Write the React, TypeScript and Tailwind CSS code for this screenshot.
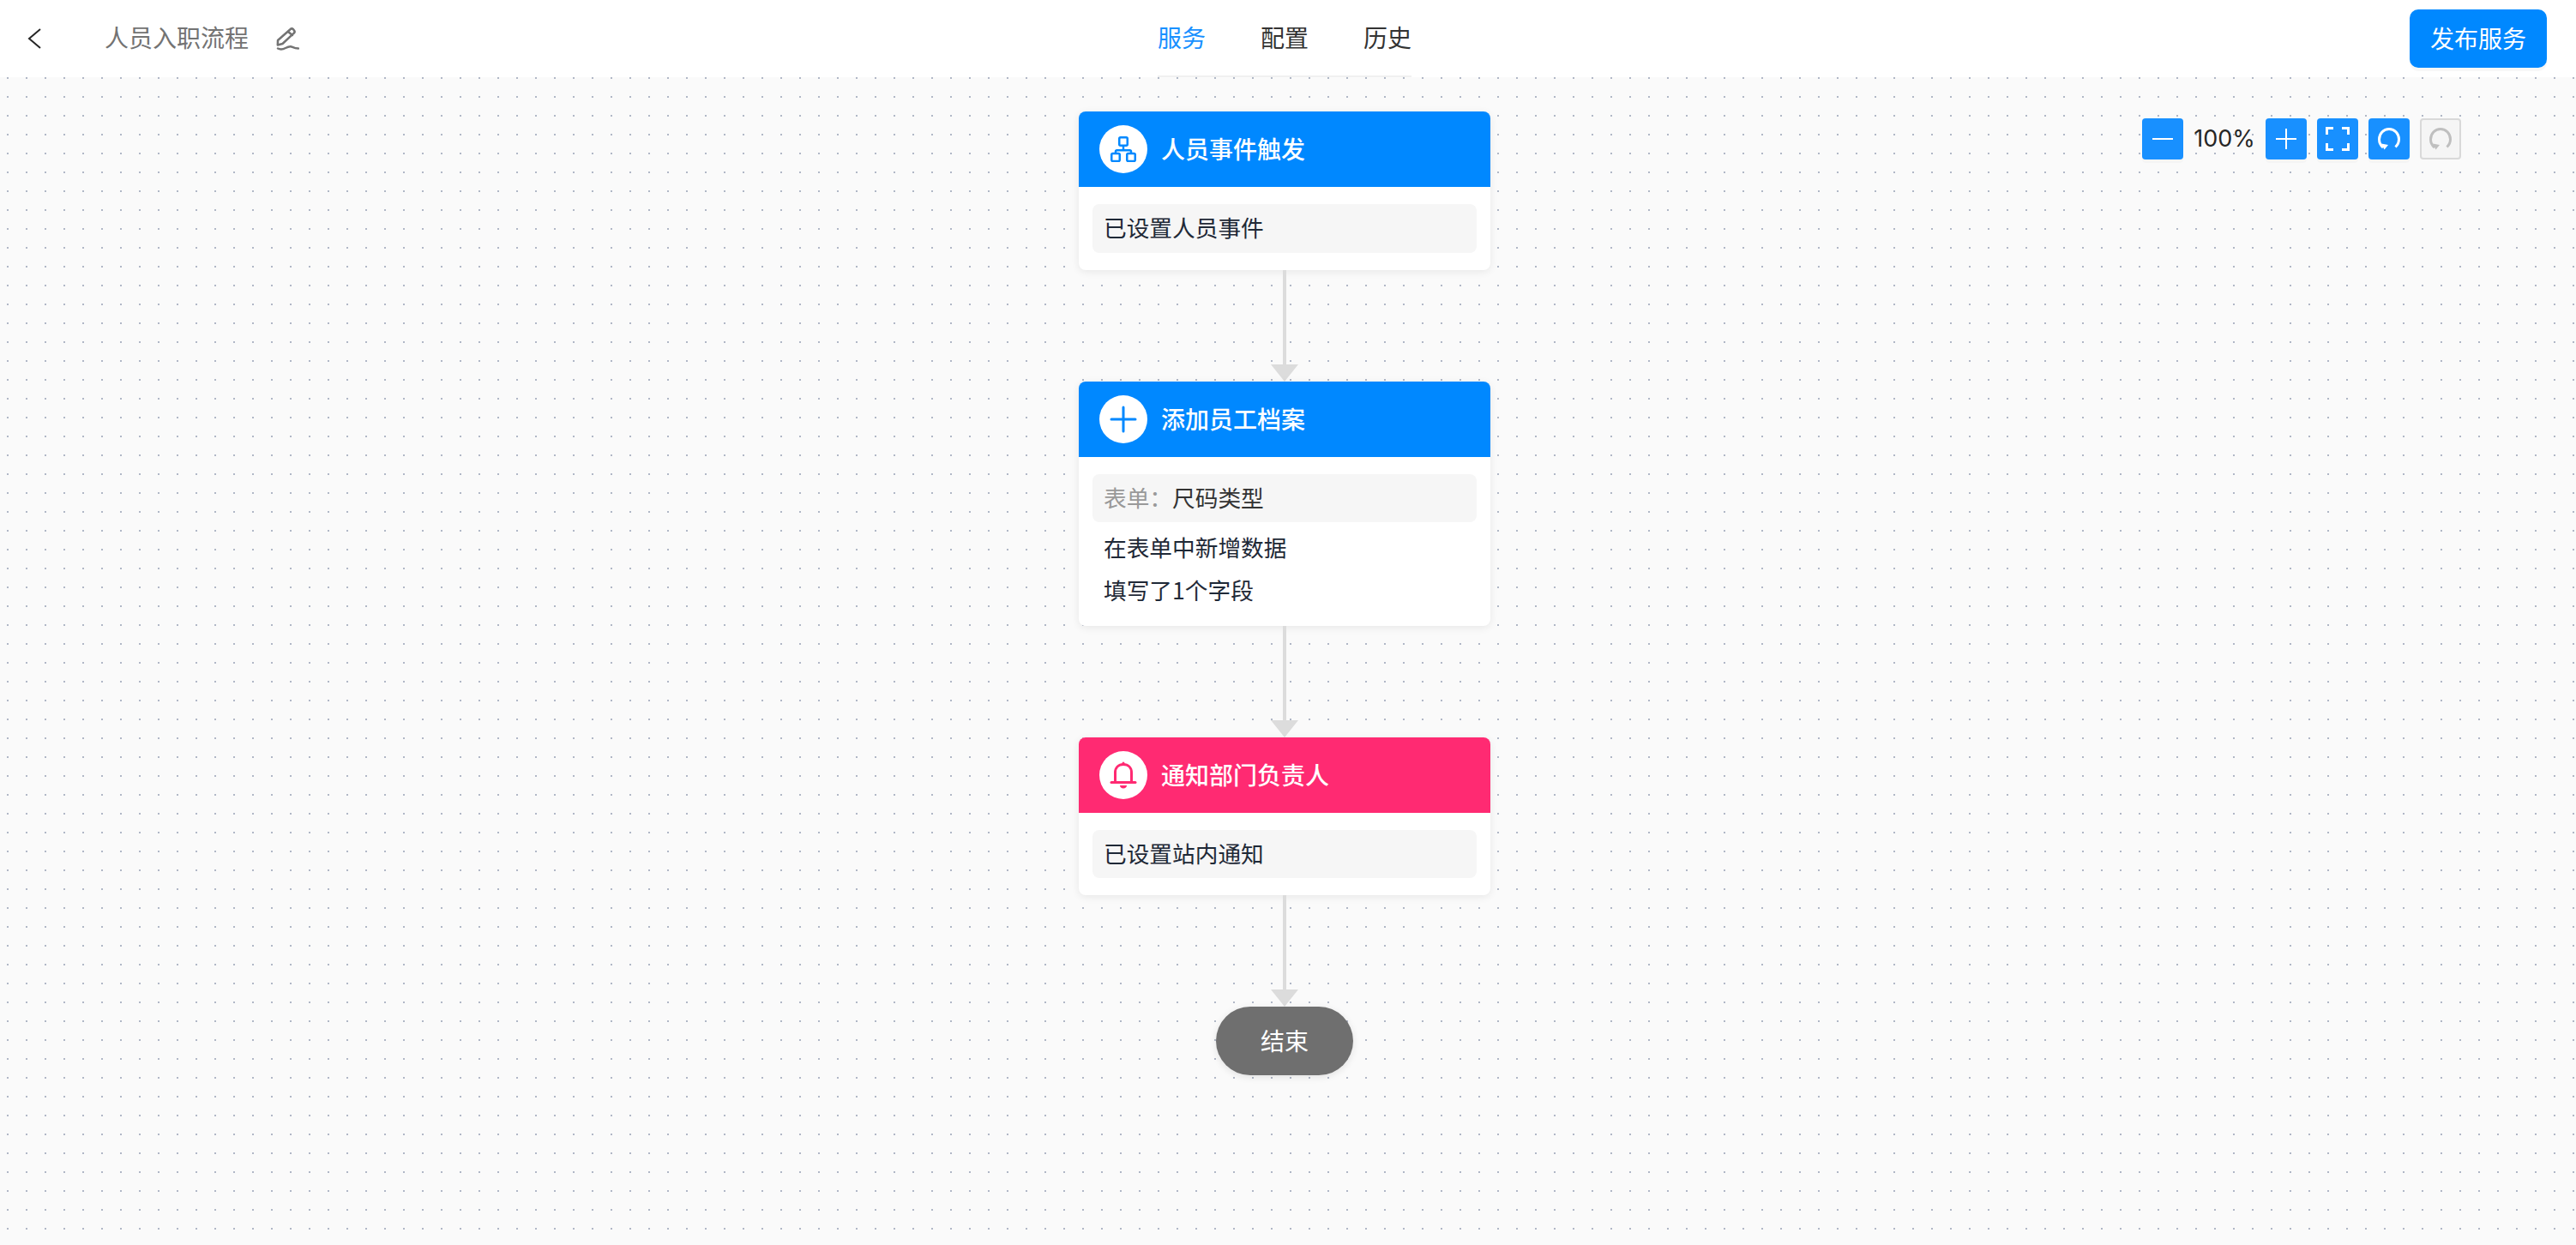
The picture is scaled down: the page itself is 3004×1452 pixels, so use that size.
import type { ReactNode } from "react";

const cjk = "font-['Noto_Sans_CJK_SC','Noto_Sans',sans-serif]";

const BackIcon = () => (
  <svg width="16" height="24" viewBox="0 0 16 24" fill="none" stroke="#262626" strokeWidth="2">
    <path d="M15 1 2 12l13 11" />
  </svg>
);

const EditIcon = () => (
  <svg width="28" height="30" viewBox="0 0 28 30" fill="none" stroke="#737373" strokeWidth="2.500" strokeLinejoin="round" strokeLinecap="round">
    <path d="M17.500 4.200c1-1 2.500-1 3.500 0l1 1.300c.8 1 .6 2.400-.3 3.200L8.500 21 2.800 22.500l.2-5.500z" />
    <path d="M15 7l5 4" />
    <path d="M3 26.500c3 1.500 6 1 9-.5 3-1.500 5-2.500 8-1.200 2 1 4 1.700 7 1.700" />
  </svg>
);

const OrgIcon = () => (
  <svg width="30" height="30" viewBox="0 0 30 30" fill="none" stroke="#0088ff" strokeWidth="2.500">
    <rect x="10.250" y="1.250" width="9.500" height="9.500" rx="1.500" />
    <rect x="1.250" y="20" width="9.500" height="9" rx="1.500" />
    <rect x="19.250" y="20" width="9.500" height="9" rx="1.500" />
    <path d="M15 10.750v5.500M6 20v-2.200c0-1 .6-1.600 1.600-1.600h14.800c1 0 1.600.6 1.600 1.600V20" />
  </svg>
);

const PlusIcon = () => (
  <svg width="32" height="32" viewBox="0 0 32 32" stroke="#0088ff" strokeWidth="3" strokeLinecap="round">
    <path d="M16 2v28M2 16h28" />
  </svg>
);

const BellIcon = () => (
  <svg width="32" height="32" viewBox="0 0 32 32" fill="none" stroke="#ff2a72" strokeWidth="3" strokeLinecap="round" strokeLinejoin="round">
    <path d="M6.500 24V13C6.500 7 10.500 3.500 16 3.500S25.500 7 25.500 13v11" />
    <path d="M16 2v1.500" />
    <path d="M2 24.500h28" />
    <path d="M12 28h8c0 2-1.800 3.500-4 3.500S12 30 12 28z" fill="#ff2a72" stroke="none" />
  </svg>
);

const Minus = () => (
  <svg width="24" height="24" viewBox="0 0 24 24" stroke="#fff" strokeWidth="2">
    <path d="M0 12h24" />
  </svg>
);

const Plus = () => (
  <svg width="24" height="24" viewBox="0 0 24 24" stroke="#fff" strokeWidth="2">
    <path d="M12 0v24M0 12h24" />
  </svg>
);

const Expand = () => (
  <svg width="28" height="28" viewBox="0 0 28 28" fill="none" stroke="#fff" strokeWidth="3">
    <path d="M9 1.500H1.500V9M19 1.500h7.500V9M1.500 19v7.500H9M26.500 19v7.500H19" />
  </svg>
);

const Redo = ({ color }: { color: string }) => (
  <svg width="26" height="26" viewBox="0 0 26 26" fill="none" stroke={color} strokeWidth="3">
    <path d="M6 23C3 20.500 1.500 17.500 1.500 13.500 1.500 7 6.500 1.500 13 1.500S24.500 7 24.500 13.500c0 3.500-1.500 6.500-4 9" />
    <path d="M4 18.500l8 1.500-4.500 5.500z" fill={color} stroke="none" />
  </svg>
);

const ToolButton = ({ children }: { children: ReactNode }) => (
  <button className="flex h-12 w-12 items-center justify-center rounded-[4px] bg-[#1890ff] shadow-[0_4px_0_rgba(0,0,0,0.02)]">
    {children}
  </button>
);

type NodeCardProps = {
  title: string;
  icon: ReactNode;
  color: string;
  children: ReactNode;
};

const NodeCard = ({ title, icon, color, children }: NodeCardProps) => (
  <div className="w-[480px] overflow-hidden rounded-lg bg-white shadow-[0_2px_10px_rgba(0,0,0,0.08)]">
    <div className={`flex h-[88px] items-center gap-4 pl-6 ${color}`}>
      <span className="flex h-14 w-14 items-center justify-center rounded-full bg-white">{icon}</span>
      <span className="pb-[2px] text-[28px] font-medium text-white">{title}</span>
    </div>
    {children}
  </div>
);

const Connector = () => (
  <div className="flex h-[130px] flex-col items-center">
    <div className="w-1 flex-1 bg-[#dcdcdc]" />
    <div className="h-0 w-0 border-x-16 border-t-20 border-x-transparent border-t-[#dcdcdc]" />
  </div>
);

const InfoBox = ({ tall, children }: { tall?: boolean; children: ReactNode }) => (
  <div className={`mx-4 mt-5 flex items-center rounded-lg bg-[#f6f6f6] px-[13px] text-[26.700px] text-[#1f2937] ${tall ? "h-[57px] pb-[3px]" : "h-14 pb-[1px]"}`}>
    {children}
  </div>
);

const App = () => {
  return (
    <div className={`flex h-[1452px] flex-col bg-white ${cjk}`}>
      <header className="flex h-[90px] shrink-0 items-center">
        <div className="flex w-[1350px] items-center pl-8">
          <BackIcon />
          <span className="ml-[74px] pb-[4px] text-[28px] text-[#737373]">人员入职流程</span>
          <span className="ml-[31px]"><EditIcon /></span>
        </div>
        <nav className="flex h-full items-center gap-16 border-b-2 border-[#f0f0f0] pb-[2px] text-[28px] text-[#333]">
          <span className="text-[#1890ff]">服务</span>
          <span>配置</span>
          <span>历史</span>
        </nav>
        <div className="flex flex-1 justify-end pr-[34px]">
          <button className="h-[68px] w-40 rounded-[10px] bg-[#0088ff] pb-[3px] text-[28px] text-white shadow-[0_4px_0_rgba(0,0,0,0.03)]">
            发布服务
          </button>
        </div>
      </header>

      <main className="relative flex flex-1 flex-col items-center bg-[#fafafa] bg-[radial-gradient(circle_at_1px_1px,#b0b7c6_1px,transparent_1.400px)] bg-[length:22px_22px] bg-[position:8px_0px] pt-10 pr-2">
        <div className="absolute top-12 right-[134px] flex items-center gap-3">
          <ToolButton><Minus /></ToolButton>
          <span className="w-[72px] text-center font-['Inter',sans-serif] text-[27px] text-[#262626]">100%</span>
          <ToolButton><Plus /></ToolButton>
          <ToolButton><Expand /></ToolButton>
          <ToolButton><Redo color="#fff" /></ToolButton>
          <button className="flex h-12 w-12 items-center justify-center rounded-[4px] border-2 border-[#d9d9d9] bg-[#f5f5f5]">
            <Redo color="#bfbfbf" />
          </button>
        </div>

        <NodeCard title="人员事件触发" icon={<OrgIcon />} color="bg-[#0088ff]">
          <InfoBox tall>已设置人员事件</InfoBox>
          <div className="h-5" />
        </NodeCard>
        <Connector />
        <NodeCard title="添加员工档案" icon={<PlusIcon />} color="bg-[#0088ff]">
          <InfoBox>
            <span className="text-[#999]">表单：</span>
            <span className="text-[#333]">尺码类型</span>
          </InfoBox>
          <div className="mt-[4px] px-[29px] pb-[17px] text-[26.700px] leading-[50px] text-[#1f2937]">
            <div>在表单中新增数据</div>
            <div>填写了1个字段</div>
          </div>
        </NodeCard>
        <Connector />
        <NodeCard title="通知部门负责人" icon={<BellIcon />} color="bg-[#ff2a72]">
          <InfoBox>已设置站内通知</InfoBox>
          <div className="h-5" />
        </NodeCard>
        <Connector />
        <div className="flex h-20 w-40 items-center justify-center rounded-full bg-[#6f6f6f] pb-[2px] text-[28px] text-white shadow-[0_2px_8px_rgba(0,0,0,0.1)]">
          结束
        </div>
      </main>
    </div>
  );
};

export default App;
